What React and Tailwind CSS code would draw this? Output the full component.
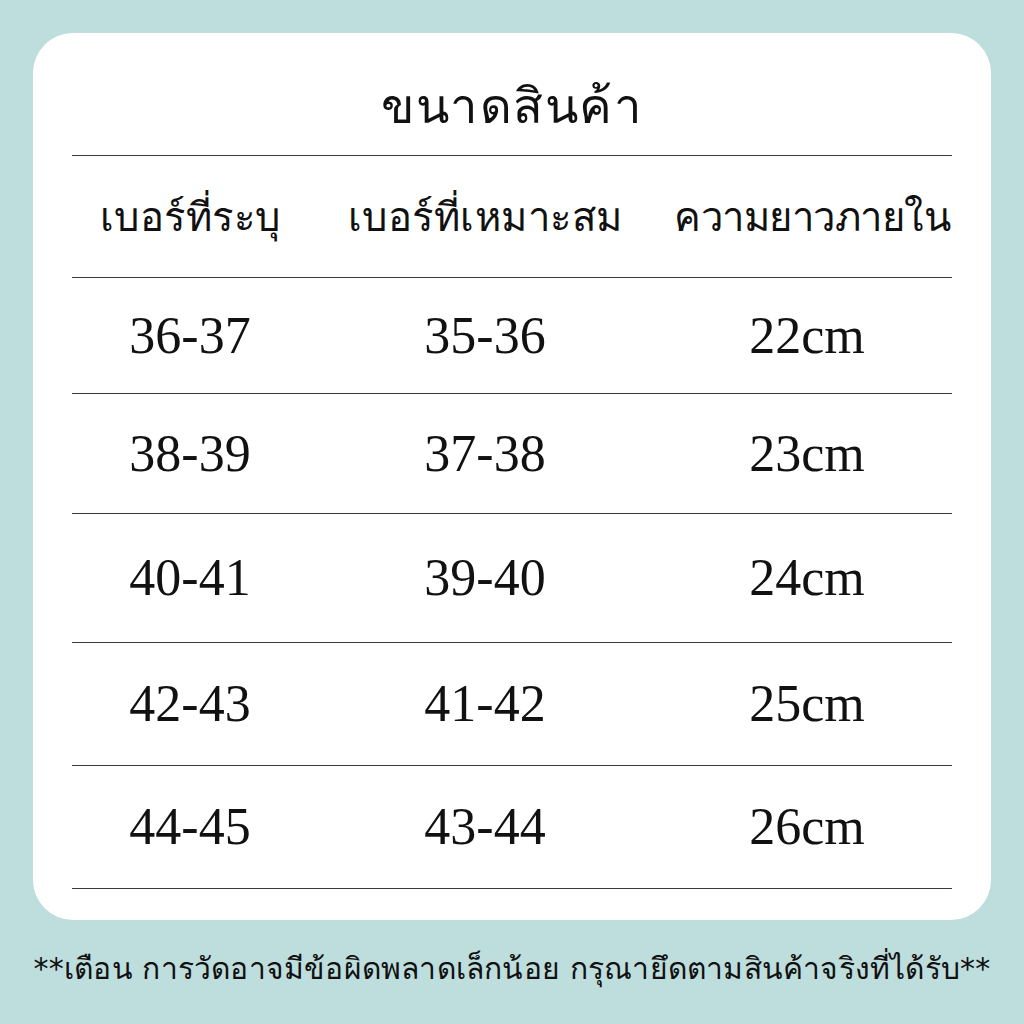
const rows = [
  { given: '36-37', fit: '35-36', len: '22cm', h: 'h-[116px]' },
  { given: '38-39', fit: '37-38', len: '23cm', h: 'h-[120px]' },
  { given: '40-41', fit: '39-40', len: '24cm', h: 'h-[129px]' },
  { given: '42-43', fit: '41-42', len: '25cm', h: 'h-[123px]' },
  { given: '44-45', fit: '43-44', len: '26cm', h: 'h-[123px]' },
];

export default function App() {
  return (
    <div className="flex h-[1024px] w-[1024px] flex-col bg-[#bedddd] px-[33px] pt-[33px] font-['DejaVu_Sans',sans-serif] text-[#111]">
      <div className="h-[887px] rounded-[40px] bg-white px-[39px] pt-[34px]">
        <h1 className="mb-[8px] text-center text-[49px] leading-[80px] tracking-[1.5px]">ขนาดสินค้า</h1>
        <div className="border-t border-[#3a3a44]">
          <div className="grid h-[122px] grid-cols-[236px_354px_290px] items-center border-b border-[#3a3a44] text-center text-[40px] tracking-[0.5px]">
            <div>เบอร์ที่ระบุ</div>
            <div>เบอร์ที่เหมาะสม</div>
            <div className="pl-[10px] tracking-[-0.5px]">ความยาวภายใน</div>
          </div>
          {rows.map((r) => (
            <div
              key={r.given}
              className={`grid ${r.h} grid-cols-[236px_354px_290px] items-center border-b border-[#3a3a44] text-center font-['Liberation_Serif',serif] text-[52px]`}
            >
              <div>{r.given}</div>
              <div>{r.fit}</div>
              <div>{r.len}</div>
            </div>
          ))}
        </div>
      </div>
      <p className="mt-[26px] whitespace-nowrap text-center text-[30px] tracking-[0.2px]">
        **เตือน การวัดอาจมีข้อผิดพลาดเล็กน้อย กรุณายึดตามสินค้าจริงที่ได้รับ**
      </p>
    </div>
  );
}
